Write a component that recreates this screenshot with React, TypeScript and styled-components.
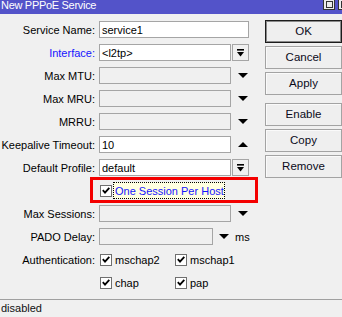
import React from "react";
import styled, { createGlobalStyle } from "styled-components";

const GlobalStyle = createGlobalStyle`
  html, body { margin: 0; padding: 0; background: #f0f0f0; overflow: hidden; }
  body { font-family: "Liberation Sans", Arial, sans-serif; font-size: 11px; color: #000; }
  * { box-sizing: border-box; }
`;

const Window = styled.div`
  width: 342px;
  height: 317px;
  display: flex;
  flex-direction: column;
  overflow: hidden;
`;

const TitleBar = styled.div`
  height: 14px;
  flex: none;
  background: #5353c9;
  color: #fff;
  display: flex;
  align-items: flex-start;
  padding-left: 1px;
  font-size: 11px;
  line-height: 10px;
  letter-spacing: -0.3px;
  white-space: nowrap;
`;

const WinControls = styled.div`
  margin-left: auto;
  display: flex;
  gap: 3px;
  margin-right: -8px;
`;

const WinBtn = styled.div`
  width: 12px;
  height: 11px;
  margin-top: -1px;
  background: #ececec;
  border: 1px solid #333;
  display: flex;
  align-items: center;
  justify-content: center;
`;

const WinGlyph = styled.div`
  width: 7px;
  height: 7px;
  border: 1px solid #333;
`;

const Main = styled.div`
  flex: 1;
  display: flex;
  min-height: 0;
`;

const Form = styled.div`
  width: 260px;
  flex: none;
  padding-top: 7px;
  display: flex;
  flex-direction: column;
  gap: 6px;
`;

const ButtonCol = styled.div`
  margin-left: 5px;
  padding-top: 6px;
  width: 77px;
  flex: none;
  display: flex;
  flex-direction: column;
  gap: 3px;
`;

const Button = styled.div<{ $primary?: boolean; $spaced?: boolean }>`
  height: 23px;
  margin-top: ${(p) => (p.$spaced ? "5px" : "0")};
  border: 1px solid ${(p) => (p.$primary ? "#1c1c1c" : "#a3a3a3")};
  box-shadow: ${(p) => (p.$primary ? "inset 0 0 0 1px #8a8a8a" : "inset 1px 1px 0 #fafafa")};
  background: #efefef;
  text-align: center;
  font-size: 11.5px;
  line-height: 21px;
  color: #0a0a1a;
`;

const Row = styled.div`
  position: relative;
  display: flex;
  align-items: flex-start;
  height: 17px;
`;

const Label = styled.div<{ $accent?: boolean }>`
  width: 95px;
  flex: none;
  height: 17px;
  padding-top: 2px;
  line-height: 15px;
  text-align: right;
  white-space: nowrap;
  color: ${(p) => (p.$accent ? "#1515ff" : "#000")};
`;

const Field = styled.div<{ $w: number; $disabled?: boolean }>`
  margin-left: 4px;
  width: ${(p) => p.$w}px;
  height: 17px;
  flex: none;
  border: 1px solid #a5a5a5;
  background: ${(p) => (p.$disabled ? "#f0f0f0" : "#fff")};
  padding: 1px 0 0 2px;
  line-height: 15px;
  white-space: nowrap;
`;

const DropButton = styled.div`
  margin-left: 1px;
  width: 17px;
  height: 17px;
  flex: none;
  border: 1px solid #a5a5a5;
  background: #f0f0f0;
  display: flex;
  align-items: center;
  justify-content: center;
`;

const ArrowSlot = styled.div<{ $ml: number }>`
  margin-left: ${(p) => p.$ml}px;
  height: 17px;
  display: flex;
  align-items: center;
  flex: none;
`;

const Unit = styled.div`
  margin-left: 6px;
  padding-top: 2px;
  line-height: 15px;
`;

const CheckGrid = styled.div`
  margin-left: 5px;
  display: grid;
  grid-template-columns: 75px auto;
  height: 17px;
  align-items: center;
`;

const CheckItem = styled.div`
  display: flex;
  align-items: center;
  height: 17px;
`;

const Box = styled.div`
  width: 12px;
  height: 12px;
  flex: none;
  border: 1px solid #6f6f6f;
  background: #fff;
  display: flex;
  align-items: center;
  justify-content: center;
`;

const CheckText = styled.div`
  margin-left: 3px;
  padding-top: 2px;
  line-height: 15px;
  white-space: nowrap;
`;

const FocusLabel = styled.div`
  margin-left: 1px;
  width: 136px;
  height: 17px;
  border: 1px dotted #000;
  background: #ffffe1;
  color: #1515ff;
  padding: 1px 0 0 1px;
  line-height: 15px;
  white-space: nowrap;
`;

const Highlight = styled.div`
  position: absolute;
  left: 90px;
  top: -5px;
  width: 168px;
  height: 26px;
  border: 3px solid #f40000;
  pointer-events: none;
`;

const StatusBar = styled.div`
  height: 18px;
  flex: none;
  border-top: 1px solid #a0a0a0;
  padding: 1px 0 0 1px;
  line-height: 15px;
  color: #111;
`;

const Down = () => (
  <svg width="10" height="5" viewBox="0 0 10 5">
    <polygon points="0,0 10,0 5,5" fill="#000" />
  </svg>
);

const Up = () => (
  <svg width="10" height="5" viewBox="0 0 10 5">
    <polygon points="0,5 10,5 5,0" fill="#000" />
  </svg>
);

const DropIcon = () => (
  <svg width="7" height="8" viewBox="0 0 7 8">
    <rect x="0" y="0" width="7" height="1.6" fill="#000" />
    <polygon points="0,3 7,3 3.5,7.5" fill="#000" />
  </svg>
);

const Check = ({ label }: { label?: string }) => (
  <CheckItem>
    <Box>
      <svg width="8" height="7" viewBox="0 0 8 7">
        <polyline points="0.8,3.2 3,5.6 7.3,0.8" fill="none" stroke="#000" strokeWidth="1.8" />
      </svg>
    </Box>
    {label && <CheckText>{label}</CheckText>}
  </CheckItem>
);

export default function App() {
  return (
    <>
      <GlobalStyle />
      <Window>
        <TitleBar>
          New PPPoE Service
          <WinControls>
            <WinBtn>
              <WinGlyph />
            </WinBtn>
            <WinBtn>
              <WinGlyph />
            </WinBtn>
          </WinControls>
        </TitleBar>
        <Main>
          <Form>
            <Row>
              <Label>Service Name:</Label>
              <Field $w={150}>service1</Field>
            </Row>
            <Row>
              <Label $accent>Interface:</Label>
              <Field $w={132}>&lt;l2tp&gt;</Field>
              <DropButton>
                <DropIcon />
              </DropButton>
            </Row>
            <Row>
              <Label>Max MTU:</Label>
              <Field $w={132} $disabled />
              <ArrowSlot $ml={7}>
                <Down />
              </ArrowSlot>
            </Row>
            <Row>
              <Label>Max MRU:</Label>
              <Field $w={132} $disabled />
              <ArrowSlot $ml={7}>
                <Down />
              </ArrowSlot>
            </Row>
            <Row>
              <Label>MRRU:</Label>
              <Field $w={132} $disabled />
              <ArrowSlot $ml={7}>
                <Down />
              </ArrowSlot>
            </Row>
            <Row>
              <Label>Keepalive Timeout:</Label>
              <Field $w={132}>10</Field>
              <ArrowSlot $ml={7}>
                <Up />
              </ArrowSlot>
            </Row>
            <Row>
              <Label>Default Profile:</Label>
              <Field $w={132}>default</Field>
              <DropButton>
                <DropIcon />
              </DropButton>
            </Row>
            <Row>
              <Label />
              <CheckGrid>
                <CheckItem>
                  <Check />
                  <FocusLabel>One Session Per Host</FocusLabel>
                </CheckItem>
              </CheckGrid>
              <Highlight />
            </Row>
            <Row>
              <Label>Max Sessions:</Label>
              <Field $w={132} $disabled />
              <ArrowSlot $ml={7}>
                <Down />
              </ArrowSlot>
            </Row>
            <Row>
              <Label>PADO Delay:</Label>
              <Field $w={114} $disabled />
              <ArrowSlot $ml={6}>
                <Down />
              </ArrowSlot>
              <Unit>ms</Unit>
            </Row>
            <Row>
              <Label>Authentication:</Label>
              <CheckGrid>
                <Check label="mschap2" />
                <Check label="mschap1" />
              </CheckGrid>
            </Row>
            <Row>
              <Label />
              <CheckGrid>
                <Check label="chap" />
                <Check label="pap" />
              </CheckGrid>
            </Row>
          </Form>
          <ButtonCol>
            <Button $primary>OK</Button>
            <Button>Cancel</Button>
            <Button>Apply</Button>
            <Button $spaced>Enable</Button>
            <Button>Copy</Button>
            <Button>Remove</Button>
          </ButtonCol>
        </Main>
        <StatusBar>disabled</StatusBar>
      </Window>
    </>
  );
}
